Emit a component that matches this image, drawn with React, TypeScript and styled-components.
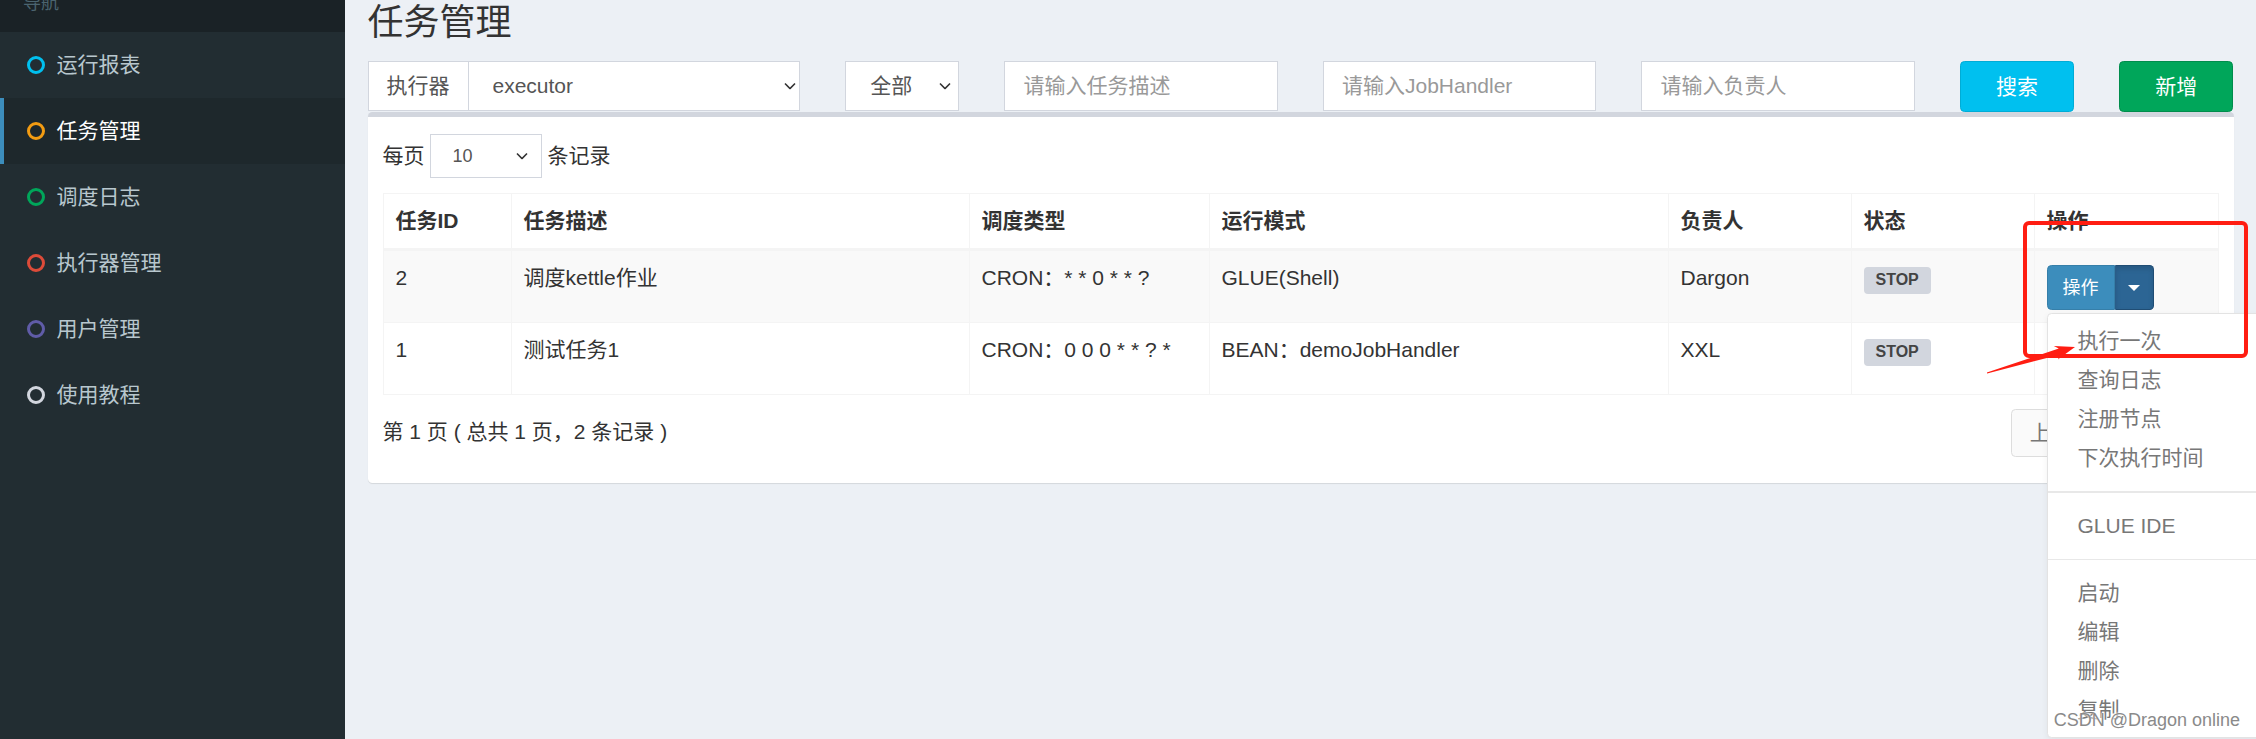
import styled, { createGlobalStyle } from "styled-components";

const GlobalStyle = createGlobalStyle`
  * { box-sizing: border-box; }
  html, body {
    margin: 0;
    padding: 0;
    overflow: hidden;
    background: #ecf0f5;
  }
  body {
    font-family: "Liberation Sans", "Noto Sans CJK SC", sans-serif;
    font-size: 21px;
    line-height: 30px;
    color: #333;
  }
`;

const menuItems = [
  { label: "运行报表", color: "#00c0ef" },
  { label: "任务管理", color: "#f39c12", active: true },
  { label: "调度日志", color: "#00a65a" },
  { label: "执行器管理", color: "#dd4b39" },
  { label: "用户管理", color: "#605ca8" },
  { label: "使用教程", color: "#d2d6de" },
];

const jobs = [
  {
    id: "2",
    desc: "调度kettle作业",
    cron: "CRON：* * 0 * * ?",
    mode: "GLUE(Shell)",
    author: "Dargon",
    open: true,
  },
  {
    id: "1",
    desc: "测试任务1",
    cron: "CRON：0 0 0 * * ? *",
    mode: "BEAN：demoJobHandler",
    author: "XXL",
    open: false,
  },
];

const Chevron = () => (
  <svg width="12" height="7" viewBox="0 0 12 7">
    <polyline points="1,1 6,6 11,1" fill="none" stroke="#333" strokeWidth="1.6" />
  </svg>
);

const App = () => {
  return (
    <Page>
      <GlobalStyle />
      <Sidebar>
        <SideHeader>
          <span>导航</span>
        </SideHeader>
        <SideMenu>
          {menuItems.map((m) => (
            <SideItem key={m.label} $active={m.active}>
              <Ring $color={m.color} />
              {m.label}
            </SideItem>
          ))}
        </SideMenu>
      </Sidebar>

      <Content>
        <Title>任务管理</Title>

        <FilterRow>
          <Col $span={3}>
            <InputGroup>
              <Addon>执行器</Addon>
              <SelectWrap>
                <Select defaultValue="executor">
                  <option value="executor">executor</option>
                </Select>
                <Arrow $right={4}>
                  <Chevron />
                </Arrow>
              </SelectWrap>
            </InputGroup>
          </Col>
          <Col $span={1}>
            <SelectWrap>
              <Select defaultValue="all">
                <option value="all">全部</option>
              </Select>
              <Arrow $right={8}>
                <Chevron />
              </Arrow>
            </SelectWrap>
          </Col>
          <Col $span={2}>
            <TextInput placeholder="请输入任务描述" />
          </Col>
          <Col $span={2}>
            <TextInput placeholder="请输入JobHandler" />
          </Col>
          <Col $span={2}>
            <TextInput placeholder="请输入负责人" />
          </Col>
          <Col $span={1}>
            <Button $bg="#00c0ef" $border="#00acd6">搜索</Button>
          </Col>
          <Col $span={1}>
            <Button $bg="#00a65a" $border="#008d4c">新增</Button>
          </Col>
        </FilterRow>

        <Box>
          <LengthRow>
            每页
            <SelectWrap $small>
              <Select $small defaultValue="10">
                <option value="10">10</option>
              </Select>
              <Arrow $right={14}>
                <Chevron />
              </Arrow>
            </SelectWrap>
            条记录
          </LengthRow>

          <Table>
            <thead>
              <tr>
                <Th $width={128}>任务ID</Th>
                <Th $width={458}>任务描述</Th>
                <Th $width={240}>调度类型</Th>
                <Th $width={459}>运行模式</Th>
                <Th $width={183}>负责人</Th>
                <Th $width={183}>状态</Th>
                <Th $width={184}>操作</Th>
              </tr>
            </thead>
            <tbody>
              {jobs.map((j, i) => (
                <Tr key={j.id} $striped={i % 2 === 0}>
                  <Td>{j.id}</Td>
                  <Td>{j.desc}</Td>
                  <Td>{j.cron}</Td>
                  <Td>{j.mode}</Td>
                  <Td>{j.author}</Td>
                  <Td>
                    <Label>STOP</Label>
                  </Td>
                  <Td>
                    <BtnGroup>
                      <OpButton>操作</OpButton>
                      <CaretButton $open={j.open}>
                        <Caret />
                      </CaretButton>
                      {j.open && (
                        <DropMenu>
                          <DropItem>执行一次</DropItem>
                          <DropItem>查询日志</DropItem>
                          <DropItem>注册节点</DropItem>
                          <DropItem>下次执行时间</DropItem>
                          <Divider />
                          <DropItem>GLUE IDE</DropItem>
                          <Divider />
                          <DropItem>启动</DropItem>
                          <DropItem>编辑</DropItem>
                          <DropItem>删除</DropItem>
                          <DropItem>复制</DropItem>
                        </DropMenu>
                      )}
                    </BtnGroup>
                  </Td>
                </Tr>
              ))}
            </tbody>
          </Table>

          <Footer>
            <Info>第 1 页 ( 总共 1 页，2 条记录 )</Info>
            <Pagination>
              <PageLink $first $muted>
                上页
              </PageLink>
              <PageLink $active>1</PageLink>
              <PageLink $last $muted>
                下页
              </PageLink>
            </Pagination>
          </Footer>
        </Box>
      </Content>

      <Annotation width="2256" height="739" viewBox="0 0 2256 739">
        <rect
          x="2025"
          y="223"
          width="221"
          height="133"
          rx="4"
          fill="none"
          stroke="#ff1d12"
          strokeWidth="4"
        />
        <polygon
          points="1986.9,372.5 2058.8,348.6 2053.8,346 2075,347 2057.8,359.4 2060.6,354.4 1987.1,373.5"
          fill="#ff1d12"
        />
      </Annotation>
      <Watermark>CSDN @Dragon online</Watermark>
    </Page>
  );
};

const Page = styled.div`
  position: relative;
  display: flex;
  width: 100vw;
  height: 100vh;
  overflow: hidden;
  background: #ecf0f5;
`;

const Sidebar = styled.aside`
  flex: 0 0 345px;
  background: #222d32;
`;

const SideHeader = styled.div`
  height: 32px;
  overflow: hidden;
  background: #1a2226;
  padding-left: 23px;

  span {
    display: block;
    margin-top: -6px;
    font-size: 18px;
    line-height: 18px;
    color: #4b646f;
  }
`;

const SideMenu = styled.ul`
  list-style: none;
  margin: 0;
  padding: 0;
`;

const SideItem = styled.li<{ $active?: boolean }>`
  display: flex;
  align-items: center;
  gap: 12px;
  height: 66px;
  padding-left: 22.5px;
  border-left: 4.5px solid ${(p) => (p.$active ? "#3c8dbc" : "transparent")};
  background: ${(p) => (p.$active ? "#1e282c" : "transparent")};
  color: ${(p) => (p.$active ? "#fff" : "#b8c7ce")};
  font-size: 21px;
`;

const Ring = styled.span<{ $color: string }>`
  width: 18px;
  height: 18px;
  border-radius: 50%;
  border: 3.5px solid ${(p) => p.$color};
`;

const Content = styled.main`
  flex: 1;
  min-width: 0;
  padding: 0 22.5px;
`;

const Title = styled.h1`
  margin: 0;
  height: 61px;
  font-size: 36px;
  line-height: 45px;
  font-weight: normal;
  color: #333;
`;

const FilterRow = styled.div`
  display: flex;
  margin: 0 -22.5px;
`;

const Col = styled.div<{ $span: number }>`
  flex: 0 0 ${(p) => (p.$span / 12) * 100}%;
  padding: 0 22.5px;
`;

const InputGroup = styled.div`
  display: flex;
  height: 50px;
`;

const Addon = styled.span`
  display: flex;
  align-items: center;
  padding: 0 18px;
  background: #fff;
  border: 1px solid #d2d6de;
  border-right: 0;
  color: #555;
  white-space: nowrap;
`;

const SelectWrap = styled.div<{ $small?: boolean }>`
  position: relative;
  flex: ${(p) => (p.$small ? "0 0 112px" : "1")};
  margin: ${(p) => (p.$small ? "0 6px 0 5px" : "0")};
`;

const Select = styled.select<{ $small?: boolean }>`
  appearance: none;
  width: 100%;
  height: ${(p) => (p.$small ? "44px" : "50px")};
  padding: 0 0 0 ${(p) => (p.$small ? "22px" : "24px")};
  border: 1px solid #d2d6de;
  border-radius: 0;
  background: #fff;
  color: #555;
  font: inherit;
  font-size: ${(p) => (p.$small ? "18px" : "21px")};
  outline: none;
`;

const Arrow = styled.span<{ $right: number }>`
  position: absolute;
  top: 50%;
  right: ${(p) => p.$right}px;
  display: flex;
  transform: translateY(-50%);
  pointer-events: none;
`;

const TextInput = styled.input`
  width: 100%;
  height: 50px;
  padding: 0 18px;
  border: 1px solid #d2d6de;
  background: #fff;
  font: inherit;
  color: #555;
  outline: none;

  &::placeholder {
    color: #999;
  }
`;

const Button = styled.button<{ $bg: string; $border: string }>`
  width: 100%;
  height: 51px;
  border: 1px solid ${(p) => p.$border};
  border-radius: 4.5px;
  background: ${(p) => p.$bg};
  color: #fff;
  font: inherit;
`;

const Box = styled.section`
  background: #fff;
  border-top: 5px solid #d2d6de;
  border-radius: 4.5px;
  box-shadow: 0 1px 1px rgba(0, 0, 0, 0.1);
  padding: 15px;
`;

const LengthRow = styled.div`
  display: flex;
  align-items: center;
  height: 46px;
  margin-bottom: 15px;
  padding-top: 2px;
`;

const Table = styled.table`
  width: 100%;
  table-layout: fixed;
  border-collapse: collapse;
  border: 1px solid #f4f4f4;
`;

const Th = styled.th<{ $width: number }>`
  width: ${(p) => p.$width}px;
  padding: 12px;
  text-align: left;
  font-weight: bold;
  border: 1px solid #f4f4f4;
  border-bottom: 3px solid #f4f4f4;
`;

const Tr = styled.tr<{ $striped: boolean }>`
  background: ${(p) => (p.$striped ? "#f9f9f9" : "#fff")};
`;

const Td = styled.td`
  padding: 12px;
  vertical-align: top;
  border: 1px solid #f4f4f4;
  white-space: nowrap;
  overflow: visible;
`;

const Label = styled.span`
  display: inline-block;
  vertical-align: top;
  margin-top: 4px;
  padding: 5px 12px 6px;
  border-radius: 4px;
  background: #d2d6de;
  color: #444;
  font-size: 16px;
  line-height: 16px;
  font-weight: bold;
`;

const BtnGroup = styled.div`
  position: relative;
  display: inline-flex;
  vertical-align: top;
  margin-top: 2px;
  height: 45px;
`;

const OpButton = styled.button`
  padding: 0 15px;
  border: 1px solid #367fa9;
  border-radius: 4.5px 0 0 4.5px;
  background: #3c8dbc;
  color: #fff;
  font: inherit;
  font-size: 18px;
`;

const CaretButton = styled.button<{ $open?: boolean }>`
  display: flex;
  align-items: center;
  justify-content: center;
  width: 39px;
  border: 1px solid #204d74;
  border-left-color: #2a5d88;
  border-radius: 0 4.5px 4.5px 0;
  background: ${(p) => (p.$open ? "#2c6594" : "#367fa9")};
  box-shadow: ${(p) => (p.$open ? "inset 0 3px 5px rgba(0,0,0,.125)" : "none")};
`;

const Caret = styled.span`
  width: 0;
  height: 0;
  border-top: 6px solid #fff;
  border-left: 6px solid transparent;
  border-right: 6px solid transparent;
`;

const DropMenu = styled.ul`
  position: absolute;
  top: 100%;
  left: 0;
  z-index: 10;
  min-width: 240px;
  margin: 3px 0 0;
  padding: 7.5px 0;
  list-style: none;
  background: #fff;
  border: 1px solid #e3e3e3;
  border-radius: 4.5px;
  box-shadow: 0 2px 6px rgba(0, 0, 0, 0.06);
`;

const DropItem = styled.li`
  padding: 4.5px 30px;
  line-height: 30px;
  color: #777;
  white-space: nowrap;
`;

const Divider = styled.li`
  height: 1.5px;
  margin: 13.5px 0;
  background: #e8e8e8;
`;

const Footer = styled.div`
  display: flex;
  justify-content: space-between;
  align-items: flex-start;
  margin: 14px 0 11px;
`;

const Info = styled.div`
  padding-top: 8px;
  color: #333;
`;

const Pagination = styled.ul`
  display: flex;
  margin: 0;
  padding: 0;
  list-style: none;
`;

const PageLink = styled.li<{
  $first?: boolean;
  $last?: boolean;
  $active?: boolean;
  $muted?: boolean;
}>`
  margin-left: ${(p) => (p.$first ? "0" : "-1px")};
  padding: 9px 18px;
  line-height: 28px;
  border: 1px solid ${(p) => (p.$active ? "#367fa9" : "#ddd")};
  border-radius: ${(p) =>
    p.$first ? "4.5px 0 0 4.5px" : p.$last ? "0 4.5px 4.5px 0" : "0"};
  background: ${(p) => (p.$active ? "#3c8dbc" : "#fafafa")};
  color: ${(p) => (p.$active ? "#fff" : p.$muted ? "#777" : "#444")};
`;

const Annotation = styled.svg`
  position: absolute;
  top: 0;
  left: 0;
  z-index: 20;
  pointer-events: none;
`;

const Watermark = styled.div`
  position: absolute;
  right: 16px;
  bottom: 8px;
  z-index: 21;
  font-size: 18px;
  line-height: 22px;
  color: #8a8a8a;
  text-shadow: 0 0 2px #fff, 0 0 2px #fff;
`;

export default App;
